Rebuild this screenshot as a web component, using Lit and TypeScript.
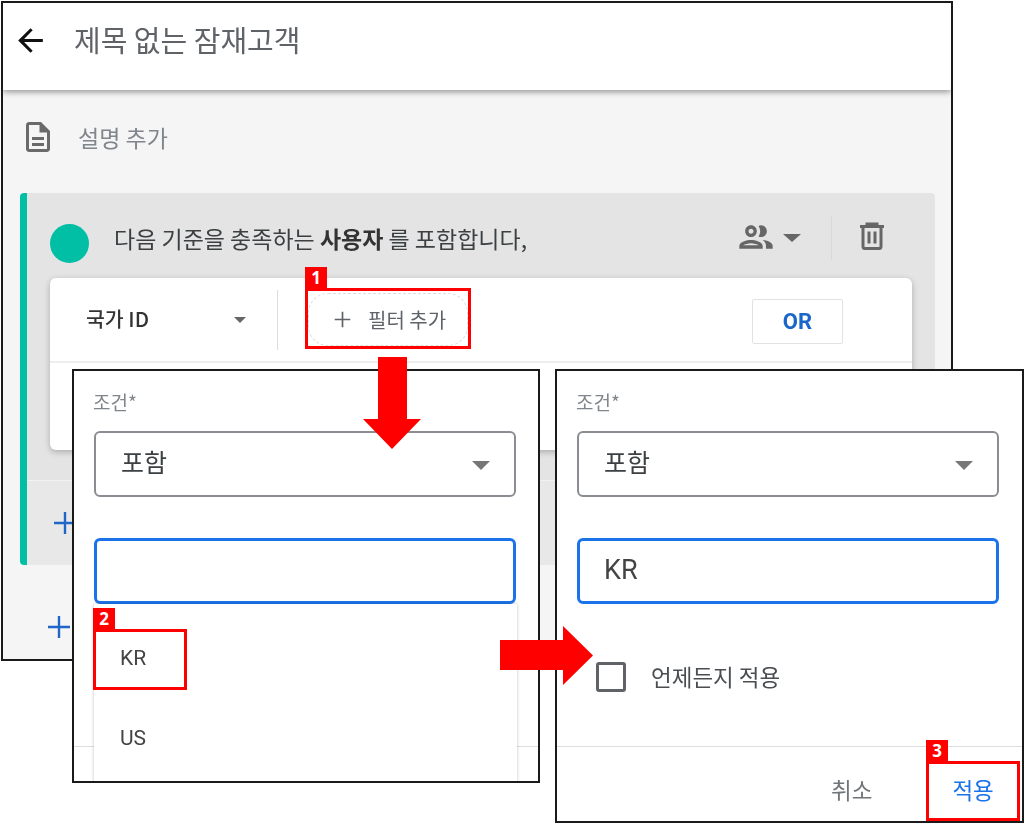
import { LitElement, html, css } from "lit";
import { customElement } from "lit/decorators.js";

const plus = (cls: string) => html`<svg class=${cls} viewBox="0 0 24 24" fill="none" stroke="currentColor" stroke-width="2.4"><path d="M12 1v22M1 12h22"/></svg>`;

@customElement("app-root")
export class AppRoot extends LitElement {
  static styles = css`
    :host { display: block; position: relative; width: 1024px; height: 824px; background: #fff; overflow: hidden; font-family: "Noto Sans CJK KR", Roboto, "Noto Sans", sans-serif; color: #3c4043; }
    * { box-sizing: border-box; }
    .main { position: absolute; left: 1px; top: 1px; width: 952px; height: 660px; border: 2px solid #1a1a1a; background: #f5f5f5; display: flex; flex-direction: column; overflow: hidden; filter: blur(.4px); }
    .appbar { height: 87px; flex: none; background: #fff; box-shadow: 0 2px 6px rgba(0,0,0,.4); display: flex; align-items: center; gap: 25px; padding: 0 0 13px 9px; position: relative; }
    .back { width: 37px; height: 37px; color: #111; flex: none; }
    .title { font-size: 29px; color: #5f6368; line-height: 36px; margin-top: -3px; }
    .desc { height: 103px; flex: none; display: flex; align-items: center; padding: 0 0 10px 17px; gap: 22px; color: #80868b; font-size: 23px; }
    .doc { width: 36px; height: 36px; color: #6a6a6a; flex: none; }
    .card { margin-left: 17px; width: 915px; height: 372px; flex: none; background: #e4e4e4; border-left: 7px solid #00bfa5; border-radius: 4px; display: flex; flex-direction: column; }
    .card-head { height: 85px; flex: none; display: flex; align-items: center; padding: 4px 50px 0 23px; position: relative; }
    .dot { width: 39px; height: 39px; border-radius: 50%; background: #00bfa5; flex: none; margin-top: 12px; }
    .sentence { margin-left: 25px; font-size: 23px; color: #3c4043; flex: 1; }
    .sentence b { font-weight: 700; color: #333; }
    .people { width: 40px; height: 40px; color: #666; margin-top: -2px; flex: none; }
    .caret { width: 0; height: 0; border-left: 9px solid transparent; border-right: 9px solid transparent; border-top: 8px solid #666; margin-left: 7px; margin-right: 30px; }
    .vdiv { width: 1px; height: 44px; background: #d8d8d8; margin-right: 27px; }
    .trash { width: 26px; height: 28px; color: #666; margin-top: -3px; flex: none; }
    .inner { margin: 0 23px; height: 172px; flex: none; background: #fff; border-radius: 6px; box-shadow: 0 2px 6px rgba(0,0,0,.25); display: flex; flex-direction: column; }
    .filter-row { height: 85px; flex: none; border-bottom: 2px solid #eee; display: flex; align-items: center; padding-left: 36px; }
    .field { width: 148px; font-size: 20.5px; font-weight: 500; color: #333; margin-top: -3px; }
    .caret-sm { width: 0; height: 0; border-left: 6px solid transparent; border-right: 6px solid transparent; border-top: 6px solid #666; margin-right: 31px; }
    .vdiv2 { width: 1px; height: 60px; background: #ddd; margin-right: 30px; }
    .add { width: 160px; height: 53px; border: 1px dashed #ddd; border-radius: 20px; display: flex; align-items: center; padding-left: 25px; gap: 17px; font-size: 20px; color: #5f6368; flex: none; }
    .plus-gray { width: 17px; height: 17px; color: #5f6368; flex: none; }
    .or { margin-left: 284px; margin-top: 4px; width: 91px; height: 45px; border: 1px solid #e2e2e2; border-radius: 2px; display: flex; align-items: center; justify-content: center; color: #1a66c9; font: 700 22px Roboto, sans-serif; flex: none; }
    .and { margin-top: 30px; flex: 1; border-top: 1px solid #f2f2f2; background: #e8e8e8; display: flex; align-items: center; padding-left: 26px; color: #1f66c8; }
    .plus-blue { width: 24px; height: 24px; color: #1f66c8; }
    .bottom { padding: 50px 0 0 44px; color: #1f66c8; }

    .panel { position: absolute; top: 369px; background: #fff; border: 2px solid #1a1a1a; display: flex; flex-direction: column; overflow: hidden; filter: blur(.4px); }
    .left { left: 72px; width: 468px; height: 414px; }
    .right { left: 555px; width: 469px; height: 454px; }
    .form { height: 376px; flex: none; padding: 21px 0 0 20px; display: flex; flex-direction: column; border-bottom: 1px solid #ddd; }
    .label { font-size: 19px; line-height: 20px; height: 20px; color: #80868b; margin: 0 0 19px -1px; }
    .select { width: 422px; height: 66px; flex: none; border: 2px solid #8a8d91; border-radius: 6px; display: flex; align-items: center; justify-content: space-between; padding: 0 24px 6px 25px; font-size: 25px; color: #3c4043; }
    .caret-md { width: 0; height: 0; border-left: 9px solid transparent; border-right: 9px solid transparent; border-top: 9px solid #777; margin-top: 8px; }
    .input { width: 422px; height: 66px; flex: none; margin-top: 41px; border: 3px solid #1a73e8; border-radius: 6px; display: flex; align-items: center; padding: 0 0 3px 24px; font: 27px Roboto, sans-serif; color: #444; }
    .list { position: absolute; left: 20px; top: 233px; width: 423px; height: 180px; background: #fff; box-shadow: 0 0 3px rgba(0,0,0,.25); display: flex; flex-direction: column; padding-left: 26px; font: 21px Roboto, sans-serif; color: #444; }
    .opt { height: 80px; display: flex; align-items: center; flex: none; }
    .opt:first-child { margin-top: 14px; }
    .check-row { display: flex; align-items: center; margin-top: 58px; padding-left: 19px; gap: 25px; font-size: 22.5px; color: #4a4e52; }
    .check-text { margin-top: -3px; }
    .box { width: 30px; height: 30px; border: 3px solid #5f6368; border-radius: 3px; flex: none; }
    .foot { flex: 1; display: flex; align-items: center; padding: 10px 0 0 274px; gap: 80px; font-size: 22.5px; }
    .cancel { color: #70757a; }
    .apply { color: #1a73e8; }

    .mark { position: absolute; border: 3px solid #f00; }
    .m1 { left: 305px; top: 288px; width: 166px; height: 61px; }
    .m2 { left: 93px; top: 629px; width: 94px; height: 61px; }
    .m3 { left: 926px; top: 761px; width: 94px; height: 60px; }
    .badge { position: absolute; background: #f00; color: #fff; font: 700 17px/21px "Noto Sans", sans-serif; width: 22px; height: 21px; text-align: center; }
    .b1 { left: 305px; top: 267px; }
    .b2 { left: 93px; top: 608px; }
    .b3 { left: 926px; top: 740px; }
    .arrow { position: absolute; }
    .arrow path { fill: #f00; }
    .down { left: 363px; top: 357px; }
    .across { left: 500px; top: 626px; }
  `;

  render() {
    return html`
      <section class="main">
        <header class="appbar">
          <svg class="back" viewBox="0 0 24 24" fill="currentColor"><path d="M20 11H7.83l5.59-5.59L12 4l-8 8 8 8 1.41-1.41L7.83 13H20v-2z"/></svg>
          <div class="title">제목 없는 잠재고객</div>
        </header>
        <div class="desc">
          <svg class="doc" viewBox="0 0 24 24" fill="currentColor"><path d="M8 16h8v2H8zm0-4h8v2H8zm6-10H6c-1.1 0-2 .9-2 2v16c0 1.1.89 2 1.99 2H18c1.1 0 2-.9 2-2V8l-6-6zm4 18H6V4h7v5h5v11z"/></svg>
          <span>설명 추가</span>
        </div>
        <div class="card">
          <div class="card-head">
            <span class="dot"></span>
            <span class="sentence">다음 기준을 충족하는 <b>사용자</b> 를 포함합니다,</span>
            <svg class="people" viewBox="0 0 24 24" fill="currentColor"><path d="M9 13.75c-2.34 0-7 1.17-7 3.5V19h14v-1.75c0-2.33-4.66-3.5-7-3.5zM4.34 17c.84-.58 2.87-1.25 4.66-1.25s3.82.67 4.66 1.25H4.34zM9 12c1.93 0 3.5-1.57 3.5-3.5S10.93 5 9 5 5.5 6.57 5.5 8.5 7.07 12 9 12zm0-5c.83 0 1.5.67 1.5 1.5S9.83 10 9 10s-1.5-.67-1.5-1.5S8.17 7 9 7zm7.04 6.81c1.16.84 1.96 1.96 1.96 3.44V19h4v-1.75c0-2.02-3.5-3.17-5.96-3.44zM15 12c1.93 0 3.5-1.57 3.5-3.5S16.93 5 15 5c-.54 0-1.04.13-1.5.35.63.89 1 1.98 1 3.15s-.37 2.26-1 3.15c.46.22.96.35 1.5.35z"/></svg>
            <span class="caret"></span>
            <span class="vdiv"></span>
            <svg class="trash" viewBox="0 0 26 28" fill="none" stroke="currentColor" stroke-width="3"><path d="M1 4.5h24M8 4.5V2h10v2.5M4 5v19.5q0 2 2 2h14q2 0 2-2V5M10 9.5v12M16 9.5v12"/></svg>
          </div>
          <div class="inner">
            <div class="filter-row">
              <span class="field">국가 ID</span>
              <span class="caret-sm"></span>
              <span class="vdiv2"></span>
              <div class="add">${plus("plus-gray")}<span>필터 추가</span></div>
              <div class="or">OR</div>
            </div>
          </div>
          <div class="and">${plus("plus-blue")}</div>
        </div>
        <div class="bottom">${plus("plus-blue")}</div>
      </section>

      <section class="panel left">
        <div class="form">
          <div class="label">조건*</div>
          <div class="select"><span>포함</span><span class="caret-md"></span></div>
          <div class="input"></div>
        </div>
        <div class="list"><div class="opt">KR</div><div class="opt">US</div></div>
      </section>

      <section class="panel right">
        <div class="form">
          <div class="label">조건*</div>
          <div class="select"><span>포함</span><span class="caret-md"></span></div>
          <div class="input">KR</div>
          <label class="check-row"><span class="box"></span><span class="check-text">언제든지 적용</span></label>
        </div>
        <div class="foot"><span class="cancel">취소</span><span class="apply">적용</span></div>
      </section>

      <div class="mark m1"></div>
      <div class="badge b1">1</div>
      <div class="mark m2"></div>
      <div class="badge b2">2</div>
      <div class="mark m3"></div>
      <div class="badge b3">3</div>

      <svg class="arrow down" width="58" height="92" viewBox="0 0 58 92"><path d="M15 0h29v62h14L29 92 0 62h15z"/></svg>
      <svg class="arrow across" width="93" height="59" viewBox="0 0 93 59"><path d="M0 14h63V0l30 29.5L63 59V44H0z"/></svg>
    `;
  }
}
